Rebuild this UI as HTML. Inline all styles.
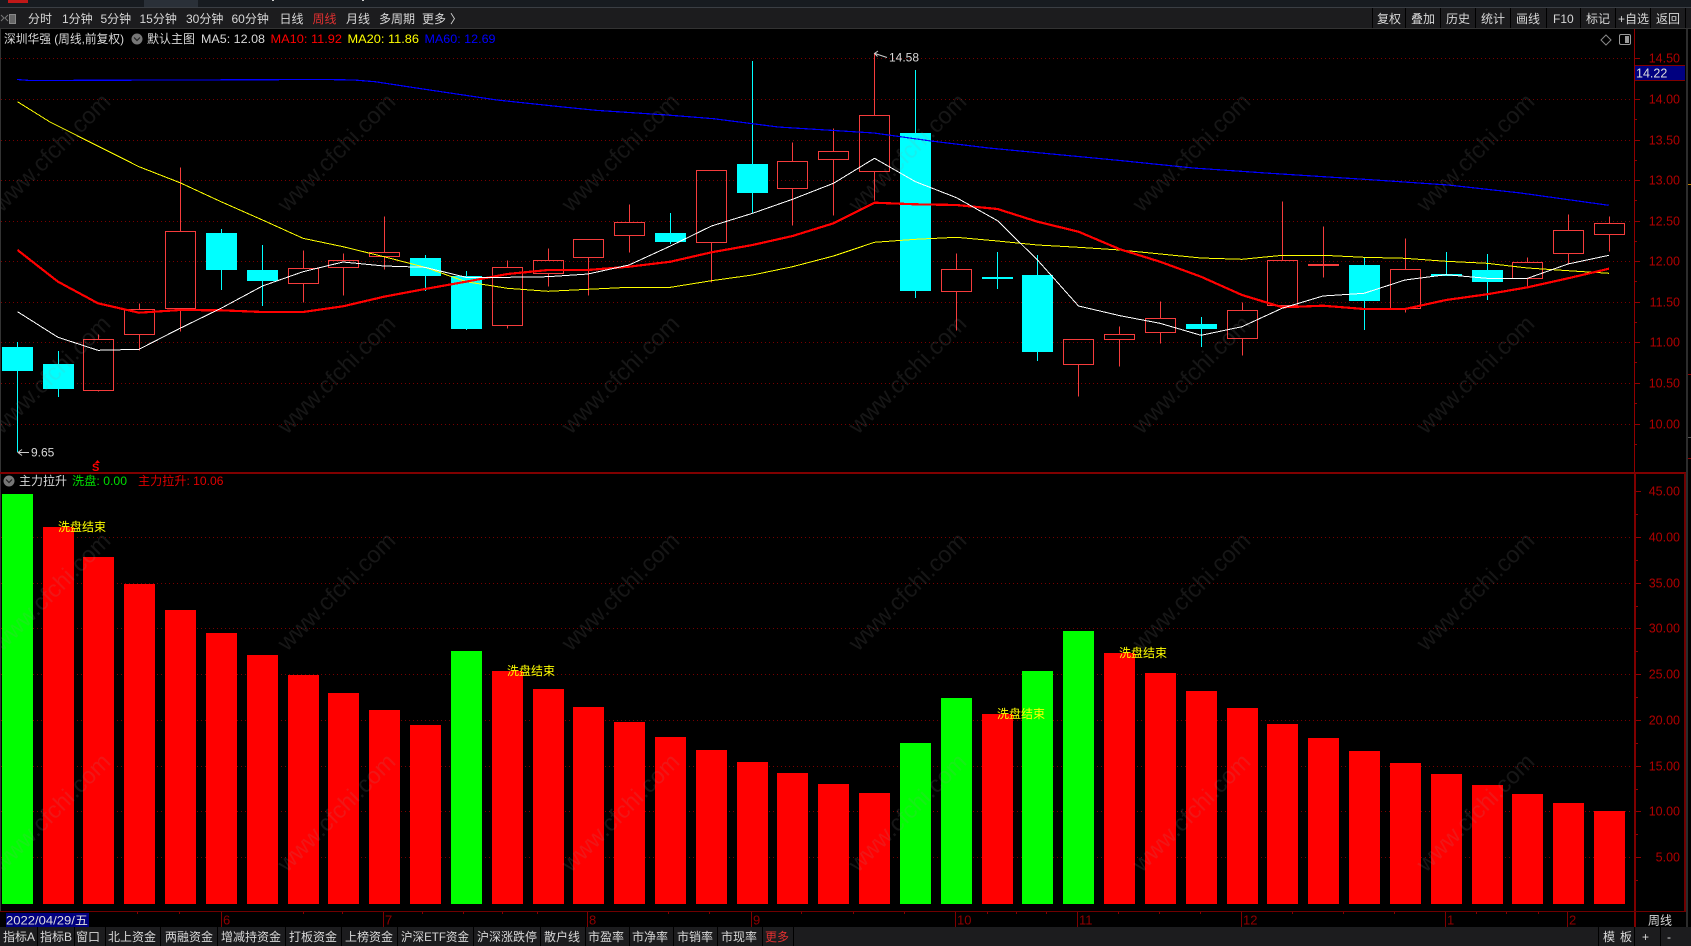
<!DOCTYPE html>
<html><head><meta charset="utf-8"><title>深圳华强</title>
<style>
html,body{margin:0;padding:0;background:#000;width:1691px;height:946px;overflow:hidden}
svg{display:block;font-family:"Liberation Sans","Noto Sans CJK SC",sans-serif;font-size:12px}
.t text{fill:#d8d8d8}
.ax text{fill:#b00000;font-size:12.5px;text-anchor:end}
.d text{fill:#900000;font-size:13px}
.wm text{fill:#969696;fill-opacity:.15;font-size:23.5px}
.sx text{fill:#ff0;font-size:12px}
</style></head><body>
<svg width="1691" height="946" viewBox="0 0 1691 946" xmlns="http://www.w3.org/2000/svg">
<rect width="1691" height="946" fill="#000"/>
<!-- top strip -->
<rect width="1691" height="7" fill="#171b20"/>
<rect x="144" width="54" height="7" fill="#2a3038"/>
<rect x="8" width="20" height="3" fill="#c01818"/>
<rect x="272" width="2" height="1" fill="#ccc"/><rect x="362" width="2" height="1" fill="#ccc"/>
<rect y="7" width="1691" height="1" fill="#3a3e44"/>
<rect y="8" width="1691" height="20" fill="#1c1c1e"/>
<rect y="28" width="1691" height="1" fill="#333"/>
<g fill="#000"><rect x="1372" y="8" width="1" height="20"/><rect x="1405" y="8" width="1" height="20"/><rect x="1440" y="8" width="1" height="20"/><rect x="1475" y="8" width="1" height="20"/><rect x="1510" y="8" width="1" height="20"/><rect x="1546" y="8" width="1" height="20"/><rect x="1580" y="8" width="1" height="20"/><rect x="1615" y="8" width="1" height="20"/><rect x="1650" y="8" width="1" height="20"/><rect x="1685" y="8" width="1" height="20"/></g>
<path d="M1 15l3 3-3 3M8 15l-3 3 3 3" fill="none" stroke="#777"/>
<rect x="9.5" y="14.500" width="6" height="9" fill="#666" stroke="#888"/>
<g class="t">
<text x="28" y="23">分时</text><text x="62" y="23">1分钟</text><text x="100.500" y="23">5分钟</text><text x="139.500" y="23">15分钟</text><text x="186" y="23">30分钟</text><text x="231.500" y="23">60分钟</text><text x="279.500" y="23">日线</text><text x="312.500" y="23" style="fill:#e03030">周线</text><text x="346" y="23">月线</text><text x="379" y="23">多周期</text><text x="422" y="23">更多</text><text x="450" y="23">〉</text>
<text x="1377" y="23">复权</text><text x="1411" y="23">叠加</text><text x="1446" y="23">历史</text><text x="1481" y="23">统计</text><text x="1516" y="23">画线</text><text x="1553" y="23">F10</text><text x="1586" y="23">标记</text><text x="1618" y="23">+自选</text><text x="1656" y="23">返回</text>
</g>
<!-- grid -->
<path d="M1 58.500H1633M1 99.500H1633M1 140.500H1633M1 180.500H1633M1 221.500H1633M1 261.500H1633M1 302.500H1633M1 342.500H1633M1 383.500H1633M1 424.500H1633M1 537.500H1633M1 583.500H1633M1 628.500H1633M1 674.500H1633M1 720.500H1633M1 766.500H1633M1 811.500H1633M1 857.500H1633" stroke="#780000" stroke-width="1" stroke-dasharray="1 3" fill="none" shape-rendering="crispEdges"/>
<!-- candles -->
<g shape-rendering="crispEdges">
<path fill="none" stroke="#f53c3c" stroke-width="1" d="M98.500 334.500V339.500M98.500 390.500V391.500M83.500 339.500H113.500V390.500H83.500ZM139.500 303.500V309.500M139.500 334.500V350.500M124.500 309.500H154.500V334.500H124.500ZM180.500 167.500V231.500M180.500 308.500V331.500M165.500 231.500H195.500V308.500H165.500ZM303.500 250.500V268.500M303.500 283.500V302.500M288.500 268.500H318.500V283.500H288.500ZM343.500 253.500V260.500M343.500 267.500V295.500M328.500 260.500H358.500V267.500H328.500ZM384.500 216.500V252.500M384.500 256.500V269.500M369.500 252.500H399.500V256.500H369.500ZM507.500 260.500V267.500M507.500 325.500V328.500M492.500 267.500H522.500V325.500H492.500ZM548.500 248.500V260.500M548.500 273.500V286.500M533.500 260.500H563.500V273.500H533.500ZM588.500 257.500V295.500M573.500 239.500H603.500V257.500H573.500ZM629.500 204.500V222.500M629.500 235.500V252.500M614.500 222.500H644.500V235.500H614.500ZM711.500 242.500V282.500M696.500 170.500H726.500V242.500H696.500ZM792.500 142.500V161.500M792.500 188.500V225.500M777.500 161.500H807.500V188.500H777.500ZM833.500 128.500V151.500M833.500 159.500V215.500M818.500 151.500H848.500V159.500H818.500ZM874.500 53.500V115.500M874.500 171.500V200.500M859.500 115.500H889.500V171.500H859.500ZM956.500 253.500V269.500M956.500 291.500V330.500M941.500 269.500H971.500V291.500H941.500ZM1078.500 364.500V396.500M1063.500 339.500H1093.500V364.500H1063.500ZM1119.500 326.500V334.500M1119.500 339.500V366.500M1104.500 334.500H1134.500V339.500H1104.500ZM1160.500 301.500V318.500M1160.500 332.500V343.500M1145.500 318.500H1175.500V332.500H1145.500ZM1242.500 302.500V310.500M1242.500 338.500V355.500M1227.500 310.500H1257.500V338.500H1227.500ZM1282.500 201.500V260.500M1282.500 305.500V307.500M1267.500 260.500H1297.500V305.500H1267.500ZM1323.500 226.500V264.500M1323.500 265.500V277.500M1308.500 264.500H1338.500V265.500H1308.500ZM1405.500 238.500V269.500M1405.500 308.500V312.500M1390.500 269.500H1420.500V308.500H1390.500ZM1527.500 257.500V262.500M1527.500 278.500V286.500M1512.500 262.500H1542.500V278.500H1512.500ZM1568.500 214.500V230.500M1568.500 253.500V263.500M1553.500 230.500H1583.500V253.500H1553.500ZM1609.500 216.500V223.500M1609.500 234.500V251.500M1594.500 223.500H1624.500V234.500H1594.500Z"/>
<path fill="none" stroke="#0ff" stroke-width="1" d="M17.500 342V452M58.500 351V397M221.500 229V290M262.500 245V306M425.500 255V291M466.500 271V330M670.500 213V244M752.500 61V213M915.500 70V298M997.500 252V289M1037.500 255V361M1201.500 317V347M1364.500 258V330M1446.500 252V276M1487.500 254V300"/>
<g fill="#0ff"><rect x="2" y="347" width="31" height="24"/><rect x="43" y="364" width="31" height="25"/><rect x="206" y="233" width="31" height="37"/><rect x="247" y="270" width="31" height="11"/><rect x="410" y="258" width="31" height="18"/><rect x="451" y="276" width="31" height="53"/><rect x="655" y="233" width="31" height="9"/><rect x="737" y="164" width="31" height="29"/><rect x="900" y="133" width="31" height="158"/><rect x="982" y="277" width="31" height="2"/><rect x="1022" y="275" width="31" height="77"/><rect x="1186" y="324" width="31" height="5"/><rect x="1349" y="265" width="31" height="36"/><rect x="1431" y="274" width="31" height="2"/><rect x="1472" y="270" width="31" height="12"/></g>
<polyline fill="none" stroke="#ffff00" stroke-width="1" points="17.500,101.700 50,122 139,166.700 180,182.700 221,201.700 262.500,220 303,238.300 343,246.700 384,256.700 425,267.300 466,281.700 507.500,288.300 548,291.300 588,289.300 629,287.300 670.500,287.300 711.500,280.700 752.500,275 792.500,266.700 833.500,256 874.500,242.300 915.500,239.300 956.500,237.300 997.500,241 1037.500,245 1078.500,247.300 1120,250 1160.400,254 1201,258 1242,259.300 1282.400,255.300 1323,255.300 1364,257.300 1405,258.300 1446,261.300 1487,263.300 1527.500,268 1568,270.700 1609,273.300"/>
<polyline fill="none" stroke="#0000ff" stroke-width="1.200" points="17,79.500 30,80.500 325,79.500 354,80 375,81.700 421,88.700 497,100 560,106.700 595.700,110.300 667,115 713.600,118.700 778,127 874,133 931,141 988.600,148 1120,160.500 1193,168 1265.700,173 1375,180 1448,185 1520.600,193 1608.700,205.300"/>
<polyline fill="none" stroke="#ff0000" stroke-width="2.200" points="17.500,250 58,281.700 98,303.300 139,312.700 180,310 221,310.300 262.500,312 303,312 343,306.300 384,296.700 425,289 466,281.700 507.500,274 548,270 588,270 629,266.700 670.500,261.700 711.500,252.300 752.500,245 792.500,236 833.500,223.300 874.500,202.700 915.500,204.300 956.500,205 997.500,209 1037.500,221.700 1078.500,231.700 1120,249.300 1160,261.700 1201,276.700 1242,295 1282.400,307.300 1323,305.700 1364,309 1405,309 1446,300 1487,294.300 1527.500,287.300 1568,278.300 1609,268.700"/>
<polyline fill="none" stroke="#ffffff" stroke-width="1" points="17.500,311.700 58,337.300 98,350.300 139,349.300 180,328.300 221,308.300 262.500,286 303,271.700 343,262 384,266 425,267.300 466,277.300 507.500,277.300 548,276.700 588,274 629,265 670.500,246 711.500,226 752.500,213.300 792.500,199.300 833.500,183.300 874.500,158.300 915.500,181.700 956.500,197.700 997.500,220.700 1037.500,260 1078.500,306 1120,315.700 1160,323.300 1201,335.300 1242,326.700 1282,308.300 1323,296 1364,293.300 1405,280 1446,274.700 1487,278.300 1527.500,278.300 1568,264 1609,255.300"/>
<!-- bars -->
<g fill="#f00">
<rect x="43" y="527" width="31" height="377"/><rect x="83" y="557" width="31" height="347"/><rect x="124" y="584" width="31" height="320"/><rect x="165" y="610" width="31" height="294"/><rect x="206" y="633" width="31" height="271"/><rect x="247" y="655" width="31" height="249"/><rect x="288" y="675" width="31" height="229"/><rect x="328" y="693" width="31" height="211"/><rect x="369" y="710" width="31" height="194"/><rect x="410" y="725" width="31" height="179"/><rect x="492" y="671" width="31" height="233"/><rect x="533" y="689" width="31" height="215"/><rect x="573" y="707" width="31" height="197"/><rect x="614" y="722" width="31" height="182"/><rect x="655" y="737" width="31" height="167"/><rect x="696" y="750" width="31" height="154"/><rect x="737" y="762" width="31" height="142"/><rect x="777" y="773" width="31" height="131"/><rect x="818" y="784" width="31" height="120"/><rect x="859" y="793" width="31" height="111"/><rect x="982" y="714" width="31" height="190"/><rect x="1104" y="653" width="31" height="251"/><rect x="1145" y="673" width="31" height="231"/><rect x="1186" y="691" width="31" height="213"/><rect x="1227" y="708" width="31" height="196"/><rect x="1267" y="724" width="31" height="180"/><rect x="1308" y="738" width="31" height="166"/><rect x="1349" y="751" width="31" height="153"/><rect x="1390" y="763" width="31" height="141"/><rect x="1431" y="774" width="31" height="130"/><rect x="1472" y="785" width="31" height="119"/><rect x="1512" y="794" width="31" height="110"/><rect x="1553" y="803" width="31" height="101"/><rect x="1594" y="811" width="31" height="93"/>
</g>
<g fill="#0f0">
<rect x="2" y="494" width="31" height="410"/><rect x="451" y="651" width="31" height="253"/><rect x="900" y="743" width="31" height="161"/><rect x="941" y="698" width="31" height="206"/><rect x="1022" y="671" width="31" height="233"/><rect x="1063" y="631" width="31" height="273"/>
</g>
</g>
<!-- watermark -->
<g class="wm">
<text transform="translate(2 213) rotate(-45)">www.cfchi.com</text><text transform="translate(287 213) rotate(-45)">www.cfchi.com</text><text transform="translate(571 213) rotate(-45)">www.cfchi.com</text><text transform="translate(858 213) rotate(-45)">www.cfchi.com</text><text transform="translate(1142 213) rotate(-45)">www.cfchi.com</text><text transform="translate(1426 213) rotate(-45)">www.cfchi.com</text>
<text transform="translate(2 435) rotate(-45)">www.cfchi.com</text><text transform="translate(287 435) rotate(-45)">www.cfchi.com</text><text transform="translate(571 435) rotate(-45)">www.cfchi.com</text><text transform="translate(858 435) rotate(-45)">www.cfchi.com</text><text transform="translate(1142 435) rotate(-45)">www.cfchi.com</text><text transform="translate(1426 435) rotate(-45)">www.cfchi.com</text>
<text transform="translate(2 652) rotate(-45)">www.cfchi.com</text><text transform="translate(287 652) rotate(-45)">www.cfchi.com</text><text transform="translate(571 652) rotate(-45)">www.cfchi.com</text><text transform="translate(858 652) rotate(-45)">www.cfchi.com</text><text transform="translate(1142 652) rotate(-45)">www.cfchi.com</text><text transform="translate(1426 652) rotate(-45)">www.cfchi.com</text>
<text transform="translate(2 873) rotate(-45)">www.cfchi.com</text><text transform="translate(287 873) rotate(-45)">www.cfchi.com</text><text transform="translate(571 873) rotate(-45)">www.cfchi.com</text><text transform="translate(858 873) rotate(-45)">www.cfchi.com</text><text transform="translate(1142 873) rotate(-45)">www.cfchi.com</text><text transform="translate(1426 873) rotate(-45)">www.cfchi.com</text>
</g>
<!-- 洗盘结束 -->
<g class="sx"><text x="58" y="531">洗盘结束</text><text x="507" y="675">洗盘结束</text><text x="997" y="718">洗盘结束</text><text x="1119" y="657">洗盘结束</text></g>
<!-- legends -->
<g class="t">
<text x="4" y="43" textLength="120" lengthAdjust="spacingAndGlyphs">深圳华强 (周线,前复权)</text>
<text x="147" y="43">默认主图</text>
<text x="201" y="43" textLength="64" lengthAdjust="spacingAndGlyphs">MA5: 12.08</text>
<text x="270.500" y="43" textLength="71.500" lengthAdjust="spacingAndGlyphs" style="fill:#f00">MA10: 11.92</text>
<text x="347.500" y="43" textLength="71.500" lengthAdjust="spacingAndGlyphs" style="fill:#ff0">MA20: 11.86</text>
<text x="424.500" y="43" textLength="71" lengthAdjust="spacingAndGlyphs" style="fill:#00f">MA60: 12.69</text>
<text x="19" y="485">主力拉升</text>
<text x="72" y="485" textLength="55" lengthAdjust="spacingAndGlyphs" style="fill:#0d0">洗盘: 0.00</text>
<text x="138" y="485" textLength="85.500" lengthAdjust="spacingAndGlyphs" style="fill:#e00000">主力拉升: 10.06</text>
<text x="31" y="456.500">9.65</text>
<text x="889" y="61.500">14.58</text>
</g>
<circle cx="137" cy="39" r="5.500" fill="#777"/><path d="M134 37.500l3 3 3-3" fill="none" stroke="#222" stroke-width="1.200"/>
<circle cx="9" cy="481" r="5.500" fill="#777"/><path d="M6 479.500l3 3 3-3" fill="none" stroke="#222" stroke-width="1.200"/>
<path d="M29 452.500H18M22 449.500l-4 3 4 3" fill="none" stroke="#ccc"/>
<path d="M887 57.500L875 53.500M878 51l-3.500 2.500 3 3" fill="none" stroke="#ccc"/>
<path d="M1606 35l5 5-5 5-5-5z" fill="none" stroke="#888"/>
<rect x="1619.500" y="34.500" width="11" height="10" rx="1.500" fill="none" stroke="#999"/><rect x="1625" y="36" width="4" height="7" fill="#999"/>
<text x="92" y="471" fill="#f00" font-weight="bold" font-size="11" style="font-size:11px">S</text>
<path d="M97.500 460l-2.500 3h5z" fill="#f00"/>
<!-- dividers -->
<g shape-rendering="crispEdges">
<rect x="0" y="29" width="1" height="883" fill="#333"/>
<rect x="1634" y="29" width="1" height="443" fill="#900000"/>
<rect x="1634" y="472" width="2" height="455" fill="#800000"/>
<rect x="0" y="472" width="1686" height="2" fill="#800000"/>
<rect x="0" y="911" width="1686" height="1" fill="#700000"/>
<rect x="1684" y="473" width="2" height="439" fill="#700000"/>
<rect x="1686" y="29" width="2" height="898" fill="#2c2c2c"/>
<rect x="1688" y="458" width="3" height="1" fill="#900000"/><rect x="1688" y="374" width="3" height="1" fill="#900000"/><rect x="1688" y="184" width="3" height="1" fill="#c08000"/><rect x="1688" y="437" width="3" height="1" fill="#555"/>
<path stroke="#900000" fill="none" d="M1634 58.500h6M1634 99.500h6M1634 140.500h6M1634 180.500h6M1634 221.500h6M1634 261.500h6M1634 302.500h6M1634 342.500h6M1634 383.500h6M1634 424.500h6M1634 119.500h3M1634 160.500h3M1634 200.500h3M1634 241.500h3M1634 281.500h3M1634 322.500h3M1634 362.500h3M1634 403.500h3M1634 444.500h3M1636 491.500h5M1636 537.500h5M1636 583.500h5M1636 628.500h5M1636 674.500h5M1636 720.500h5M1636 766.500h5M1636 811.500h5M1636 857.500h5M1636 514.500h2M1636 560.500h2M1636 606.500h2M1636 651.500h2M1636 697.500h2M1636 743.500h2M1636 789.500h2M1636 834.500h2M1636 880.500h2"/>
<path stroke="#800000" fill="none" d="M221.500 912v15M383.500 912v15M587.500 912v15M751.500 912v15M955.500 912v15M1077.500 912v15M1241.500 912v15M1445.500 912v15M1567.500 912v15M137.500 912v2M179.500 912v2M303.500 912v2M342.500 912v2M422.500 912v2M463.500 912v2M502.500 912v2M537.500 912v2M668.500 912v2M709.500 912v2M801.500 912v2M853.500 912v2M904.500 912v2M987.500 912v2M1016.500 912v2M1046.500 912v2M1118.500 912v2M1159.500 912v2M1200.500 912v2M1292.500 912v2M1343.500 912v2M1394.500 912v2M1476.500 912v2M1506.500 912v2M1538.500 912v2"/>
</g>
<!-- price box -->
<rect x="1635" y="65" width="50" height="16" fill="#000080"/>
<path d="M1635 65.500H1685M1635 80.500H1685" stroke="#800000" fill="none"/>
<text x="1636" y="77.500" fill="#ddd" style="font-size:12.500px">14.22</text>
<g class="ax">
<text x="1680" y="62.500">14.50</text><text x="1680" y="103.500">14.00</text><text x="1680" y="144.500">13.50</text><text x="1680" y="184.500">13.00</text><text x="1680" y="225.500">12.50</text><text x="1680" y="265.500">12.00</text><text x="1680" y="306.500">11.50</text><text x="1680" y="346.500">11.00</text><text x="1680" y="387.500">10.50</text><text x="1680" y="428.500">10.00</text>
<text x="1680" y="495.500">45.00</text><text x="1680" y="541.500">40.00</text><text x="1680" y="587.500">35.00</text><text x="1680" y="632.500">30.00</text><text x="1680" y="678.500">25.00</text><text x="1680" y="724.500">20.00</text><text x="1680" y="770.500">15.00</text><text x="1680" y="815.500">10.00</text><text x="1680" y="861.500">5.00</text>
</g>
<!-- date row -->
<rect x="6" y="913" width="83" height="14" fill="#000080"/>
<text x="6" y="924.500" fill="#ddd" textLength="82" lengthAdjust="spacingAndGlyphs">2022/04/29/五</text>
<g class="d"><text x="223" y="924.500">6</text><text x="385" y="924.500">7</text><text x="589" y="924.500">8</text><text x="753" y="924.500">9</text><text x="957" y="924.500">10</text><text x="1079" y="924.500">11</text><text x="1243" y="924.500">12</text><text x="1447" y="924.500">1</text><text x="1569" y="924.500">2</text></g>
<text x="1648" y="924.500" fill="#d8d8d8">周线</text>
<!-- bottom bar -->
<rect y="927" width="1691" height="19" fill="#1c1c1e"/>
<g fill="#000"><rect x="37" y="927" width="1" height="19"/><rect x="74" y="927" width="1" height="19"/><rect x="105" y="927" width="1" height="19"/><rect x="160" y="927" width="1" height="19"/><rect x="217" y="927" width="1" height="19"/><rect x="285" y="927" width="1" height="19"/><rect x="341" y="927" width="1" height="19"/><rect x="397" y="927" width="1" height="19"/><rect x="473" y="927" width="1" height="19"/><rect x="540" y="927" width="1" height="19"/><rect x="585" y="927" width="1" height="19"/><rect x="629" y="927" width="1" height="19"/><rect x="673" y="927" width="1" height="19"/><rect x="717" y="927" width="1" height="19"/><rect x="762" y="927" width="1" height="19"/><rect x="793" y="927" width="1" height="19"/><rect x="1598" y="927" width="1" height="19"/><rect x="1634" y="927" width="1" height="19"/><rect x="1660" y="927" width="1" height="19"/></g>
<g class="t">
<text x="3" y="941">指标A</text><text x="40" y="941">指标B</text><text x="76" y="941">窗口</text><text x="108" y="941">北上资金</text><text x="165" y="941">两融资金</text><text x="221" y="941">增减持资金</text><text x="289" y="941">打板资金</text><text x="345" y="941">上榜资金</text><text x="401" y="941" textLength="68" lengthAdjust="spacingAndGlyphs">沪深ETF资金</text><text x="477" y="941">沪深涨跌停</text><text x="544" y="941">散户线</text><text x="588" y="941">市盈率</text><text x="632" y="941">市净率</text><text x="677" y="941">市销率</text><text x="721" y="941">市现率</text><text x="765" y="941" style="fill:#e03030">更多</text>
<text x="1603" y="941">模</text><text x="1620" y="941">板</text><text x="1642" y="941">+</text><text x="1667" y="941">-</text>
</g>
</svg>
</body></html>
